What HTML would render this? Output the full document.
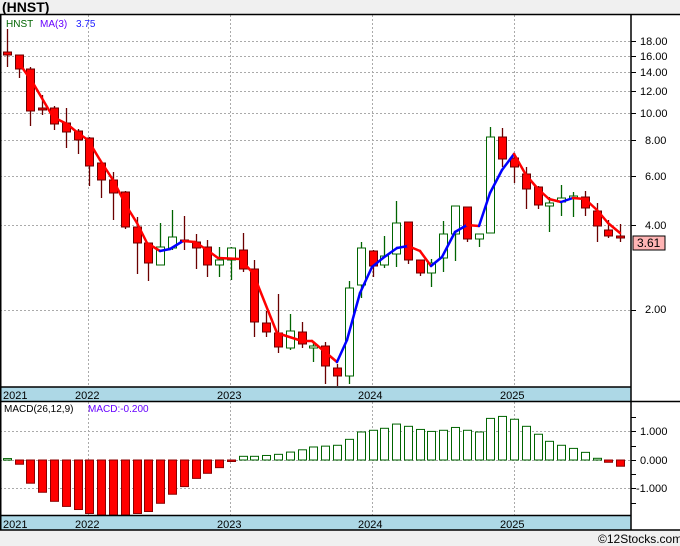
<!DOCTYPE html>
<html><head><meta charset="utf-8"><style>
html,body{margin:0;padding:0;background:#f0f0f0;width:680px;height:546px;overflow:hidden;font-family:"Liberation Sans",sans-serif}
svg{position:absolute;left:0;top:0}
</style></head><body>
<svg id="s" width="680" height="546" xmlns="http://www.w3.org/2000/svg" font-family="Liberation Sans, sans-serif">
<rect x="0" y="0" width="680" height="546" fill="#f0f0f0"/>
<text x="2" y="12" font-size="14" font-weight="bold" fill="#000">(HNST)</text>
<rect x="0" y="14" width="680" height="516" fill="#fff"/>
<g id="grid" stroke="#aaa" stroke-width="1" stroke-dasharray="2,2"></g>
<rect x="0" y="387" width="631" height="14" fill="#add8e6"/>
<rect x="0" y="516" width="631" height="14" fill="#add8e6"/>
<g id="plot"></g>
<g stroke="#000" stroke-width="1.5" fill="none">
<line x1="0" y1="14.5" x2="680" y2="14.5"/>
<line x1="0.75" y1="14" x2="0.75" y2="530"/>
<line x1="631" y1="14" x2="631" y2="530"/>
<line x1="0" y1="387" x2="631" y2="387"/>
<line x1="0" y1="401.5" x2="680" y2="401.5"/>
<line x1="0" y1="515.5" x2="631" y2="515.5"/>
<line x1="0" y1="530" x2="680" y2="530"/>
</g>
<g id="ticks" stroke="#000" stroke-width="1"></g>
<g font-size="11" fill="#000">
<text x="640" y="45">18.00</text><text x="640" y="60">16.00</text><text x="640" y="76">14.00</text><text x="640" y="95">12.00</text><text x="640" y="117">10.00</text><text x="645" y="144">8.00</text><text x="645" y="180">6.00</text><text x="645" y="229">4.00</text><text x="645" y="313">2.00</text>
<text x="640" y="435">1.000</text><text x="640" y="464">0.000</text><text x="636" y="492">-1.000</text>
<text x="3" y="399">2021</text><text x="75" y="399">2022</text><text x="217" y="399">2023</text><text x="358" y="399">2024</text><text x="500" y="399">2025</text>
<text x="3" y="528">2021</text><text x="75" y="528">2022</text><text x="217" y="528">2023</text><text x="358" y="528">2024</text><text x="500" y="528">2025</text>
<text x="6" y="27" fill="#006400" font-size="10">HNST</text><text x="40" y="27" fill="#6600ff" font-size="10">MA(3)</text><text x="76" y="27" fill="#2222ff" font-size="10">3.75</text>
<text x="4" y="412" font-size="10">MACD(26,12,9)</text><text x="88" y="412" fill="#6600ff" font-size="10">MACD:-0.200</text>
<text x="598" y="543" font-size="12">©12Stocks.com</text>
</g>
<rect x="633" y="236" width="32" height="14" fill="#ffb4b4" stroke="#000"/>
<text x="637" y="247" font-size="12" fill="#000">3.61</text>
</svg>
<script>
var NS="http://www.w3.org/2000/svg",g=document.getElementById('grid'),p=document.getElementById('plot'),tk=document.getElementById('ticks');
function el(par,t,a){var e=document.createElementNS(NS,t);for(var k in a)e.setAttribute(k,a[k]);par.appendChild(e);return e;}
[41,56,72,91,113,140,176,225,310].forEach(function(y){el(g,'line',{x1:0,x2:631,y1:y+.5,y2:y+.5});el(tk,'line',{x1:631,x2:636,y1:y+.5,y2:y+.5});});
[431,488].forEach(function(y){el(g,'line',{x1:0,x2:631,y1:y+.5,y2:y+.5});});
[417,431,446,460,474,488,503].forEach(function(y){el(tk,'line',{x1:631,x2:636,y1:y+.5,y2:y+.5});});
[88,230,372,514].forEach(function(x){el(g,'line',{x1:x+.5,x2:x+.5,y1:15,y2:387});el(g,'line',{x1:x+.5,x2:x+.5,y1:402,y2:515});});
el(g,'line',{x1:0,x2:631,y1:460.5,y2:460.5});
// x, bodyTop, bodyBot, wickTop, wickBot, green?
var C=[[7,52,55,29,67,0],[19,55,69,55,78,0],[30,69,111,67,126,0],[42,108,110,95,115,0],[54,108,124,106,130,0],[66,123,132,108,148,0],[78,131,140,129,154,0],[89,138,166,137,186,0],[101,163,180,163,198,0],[113,180,193,172,220,0],[125,192,227,191,229,0],[137,227,243,217,274,0],[148,243,263,243,281,0],[160,247,265,223,265,1],[172,237,248,210,250,1],[184,240,242,216,250,0],[196,242,248,234,269,0],[207,247,265,240,277,0],[219,260,265,247,277,1],[231,248,260,247,280,1],[243,250,269,233,272,0],[254,269,322,260,337,0],[266,323,332,311,337,0],[278,333,347,294,353,0],[290,331,348,314,350,1],[302,332,344,322,348,0],[313,346,347,341,362,1],[325,346,366,342,384,0],[337,368,376,364,386,0],[349,288,376,281,384,1],[361,248,285,242,298,1],[373,251,266,250,277,0],[384,256,265,236,268,1],[396,223,254,201,267,1],[408,222,260,222,264,0],[420,260,273,260,276,0],[431,263,273,259,287,1],[443,234,258,221,272,1],[455,206,234,206,261,1],[467,207,239,207,242,0],[479,234,239,234,247,1],[490,137,233,127,233,1],[502,137,159,128,167,0],[514,158,167,153,183,0],[526,174,189,167,209,0],[538,187,205,186,209,0],[549,203,206,197,232,1],[561,198,202,185,216,1],[573,196,198,192,217,1],[585,197,208,191,216,0],[597,211,226,203,242,0],[608,230,236,220,238,0],[620,236,238,224,242,0]];
C.forEach(function(c){var col=c[5]?'#006400':'#6b0000';el(p,'line',{x1:c[0]+.5,x2:c[0]+.5,y1:c[1],y2:c[3],stroke:col,'stroke-width':1.3});el(p,'line',{x1:c[0]+.5,x2:c[0]+.5,y1:c[2],y2:c[4],stroke:col,'stroke-width':1.3});
var h=Math.max(c[2]-c[1],2);el(p,'rect',{x:c[0]-3.5,y:c[1],width:8,height:h,fill:c[5]?'#fff':'#ff0000',stroke:col,'stroke-width':1});});
var M=[[19,63],[33,83],[53,117],[67,124],[78,133],[88,140],[100,160],[113,180],[127,207],[137,223],[147,243],[160,251],[170,249],[183,241],[195,242],[207,250],[218,258],[240,259],[253,273],[277,333],[302,341],[312,341],[337,362],[347,340],[360,293],[372,267],[383,258],[397,248],[408,246],[420,251],[431,266],[442,257],[455,232],[467,225],[479,226],[490,193],[502,170],[514,154],[526,175],[538,189],[549,199],[561,202],[573,198],[585,199],[597,210],[608,223],[620,233]];
for(var i=1;i<M.length;i++){var a=M[i-1],b=M[i];el(p,'line',{x1:a[0],y1:a[1],x2:b[0],y2:b[1],stroke:b[1]<a[1]?'#0000ff':'#ff0000','stroke-width':2.5,'stroke-linecap':'round'});}
var V=[.05,-.15,-.82,-1.14,-1.46,-1.64,-1.75,-1.89,-1.95,-1.97,-1.97,-1.89,-1.82,-1.53,-1.21,-.94,-.65,-.47,-.27,-.02,.13,.13,.16,.2,.28,.36,.46,.49,.52,.73,.99,1.05,1.12,1.27,1.19,1.08,1.01,1.05,1.15,1.05,.99,1.47,1.54,1.44,1.19,.91,.66,.52,.41,.27,.06,-.08,-.22];
V.forEach(function(v,i){var x=C[i][0],y0=460,y1=460-v*28.3;var t=Math.min(y0,y1),h=Math.max(Math.abs(y1-y0),1.5);if(t+h>515)h=515-t;
el(p,'rect',{x:x-3.5,y:t,width:8,height:h,fill:v>0?'#fff':'#ff0000',stroke:v>0?'#006400':'#8b0000','stroke-width':1});});
</script>
</body></html>
